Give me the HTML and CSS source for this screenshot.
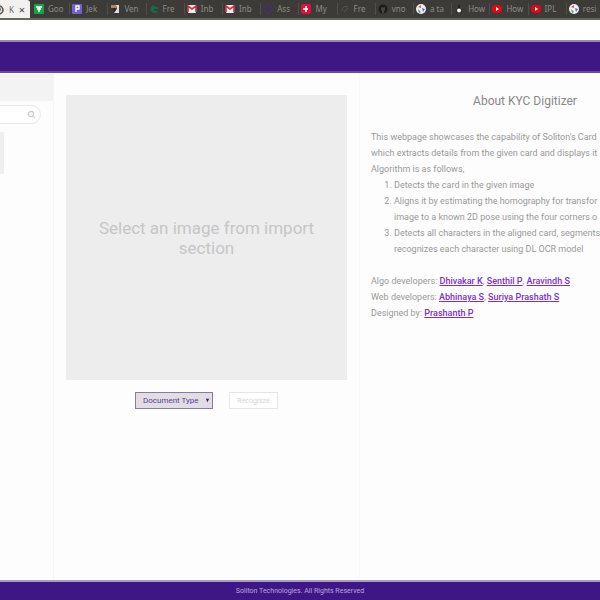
FILE: index.html
```
<!DOCTYPE html>
<html lang="en">
<head>
<meta charset="utf-8">
<title>KYC Digitizer</title>
<link rel="stylesheet" href="styles.css">
</head>
<body>
<nav class="tabs" aria-label="Tabs">
  <div class="tab-active">
    <svg class="globe" viewBox="0 0 10 10"><circle cx="5" cy="5" r="4" fill="#ddd" stroke="#555" stroke-width="1.5"/><path d="M3 3l3-1 1 3-3 2z" fill="#555"/></svg>
    <span>K</span><button class="close" aria-label="Close tab">×</button>
  </div>
  <div class="tab-list">
    <a class="tab" href="#"><svg viewBox="0 0 10 10"><rect width="10" height="10" rx="1" fill="#16a34a"/><path d="M2 3h6M5 3v5M3 5h4" stroke="#fff" stroke-width="1.4"/></svg><span>Goo</span></a>
    <a class="tab" href="#"><svg viewBox="0 0 10 10"><rect width="10" height="10" rx="1" fill="#7060d0"/><path d="M4 8V2h3v3H4" fill="none" stroke="#fff" stroke-width="1.3"/></svg><span>Jek</span></a>
    <a class="tab" href="#"><svg viewBox="0 0 10 10"><path d="M1 1h5v3H1z" fill="#b98058"/><path d="M6 1h3v8H4l3-4z" fill="#ddd"/><path d="M3 4l3 1-2 3z" fill="#222"/></svg><span>Ven</span></a>
    <a class="tab" href="#"><svg viewBox="0 0 10 10"><path d="M5 1a4 4 0 1 0 4 6H5V5h4V3H6z" fill="#176b50"/></svg><span>Fre</span></a>
    <a class="tab" href="#"><svg viewBox="0 0 10 10"><rect x="1" y="1" width="8" height="8" rx="1" fill="#eee"/><path d="M1 8V2l4 3 4-3v6" fill="none" stroke="#d93040" stroke-width="1.6"/></svg><span>Inb</span></a>
    <a class="tab" href="#"><svg viewBox="0 0 10 10"><rect x="1" y="1" width="8" height="8" rx="1" fill="#eee"/><path d="M1 8V2l4 3 4-3v6" fill="none" stroke="#d93040" stroke-width="1.6"/></svg><span>Inb</span></a>
    <a class="tab" href="#"><svg viewBox="0 0 10 10"><circle cx="5" cy="5" r="4" fill="none" stroke="#4b2a88" stroke-width="1.6" stroke-dasharray="3 1"/></svg><span>Ass</span></a>
    <a class="tab" href="#"><svg viewBox="0 0 10 10"><rect width="10" height="10" rx="2" fill="#e0103c"/><path d="M5 2v6M2 5h5" stroke="#fff" stroke-width="1.5"/></svg><span>My</span></a>
    <a class="tab" href="#"><svg viewBox="0 0 10 10"><path d="M2 7a4 4 0 0 1 6-4M4 8l4-4" fill="none" stroke="#555751"/></svg><span>Fre</span></a>
    <a class="tab" href="#"><svg viewBox="0 0 10 10"><circle cx="5" cy="5" r="4.500" fill="#1c1d1b"/><path d="M3 3l1 .5h2L7 3v3L6 7v2H4V7L3 6z" fill="#45463f"/></svg><span>vno</span></a>
    <a class="tab" href="#"><svg viewBox="0 0 10 10"><circle cx="5" cy="5" r="5" fill="#eee"/><path d="M2 3l3-2v3z" fill="#d85060"/><path d="M2 5l3 3-2 1z" fill="#35a867"/><path d="M6 4l3 1-2 3z" fill="#6070d0"/></svg><span>a ta</span></a>
    <a class="tab" href="#"><svg viewBox="0 0 10 10"><path d="M4 1h2v3l2 3-1 2H3L2 7l2-3z" fill="#222"/><circle cx="5" cy="6.500" r="2" fill="#fff"/></svg><span>How</span></a>
    <a class="tab" href="#"><svg viewBox="0 0 10 10"><rect y="1" width="10" height="8" rx="3" fill="#df0716"/><path d="M4 3l3 2-3 2z" fill="#fff"/></svg><span>How</span></a>
    <a class="tab" href="#"><svg viewBox="0 0 10 10"><rect y="1" width="10" height="8" rx="3" fill="#df0716"/><path d="M4 3l3 2-3 2z" fill="#fff"/></svg><span>IPL</span></a>
    <a class="tab" href="#"><svg viewBox="0 0 10 10"><circle cx="5" cy="5" r="5" fill="#eee"/><path d="M2 3l3-2v3z" fill="#d85060"/><path d="M2 5l3 3-2 1z" fill="#35a867"/><path d="M6 4l3 1-2 3z" fill="#6070d0"/></svg><span>resi</span></a>
  </div>
</nav>
<div class="toolbar"></div>
<header class="banner"></header>
<div class="content">
  <aside class="sidebar">
    <div class="side-head"></div>
    <div class="search">
      <input type="search" aria-label="Search">
      <svg viewBox="0 0 10 10"><circle cx="4.500" cy="4.500" r="3" fill="#f4f4f4" stroke="#ccc" stroke-width="1.3"/><path d="M7 7l2 2" stroke="#ccc" stroke-width="1.3"/></svg>
    </div>
    <div class="thumb"></div>
  </aside>
  <main class="workspace">
    <div class="preview">Select an image from import section</div>
    <div class="actions">
      <div class="select-box">
        <select aria-label="Document type"><option>Document Type</option></select>
        <svg viewBox="0 0 6 6"><path d="M1 1h4L3 5z" fill="#3d1785"/></svg>
      </div>
      <button class="recognize" disabled>Recognize</button>
    </div>
  </main>
  <section class="about">
    <h1>About KYC Digitizer</h1>
    <p>This webpage showcases the capability of Soliton's Card<br>which extracts details from the given card and displays it<br>Algorithm is as follows,</p>
    <ol>
      <li>Detects the card in the given image</li>
      <li>Aligns it by estimating the homography for transfor<br>image to a known 2D pose using the four corners o</li>
      <li>Detects all characters in the aligned card, segments<br>recognizes each character using DL OCR model</li>
    </ol>
    <p class="credits">Algo developers: <a href="#">Dhivakar K</a>, <a href="#">Senthil P</a>, <a href="#">Aravindh S</a><br>Web developers: <a href="#">Abhinaya S</a>, <a href="#">Suriya Prashath S</a><br>Designed by: <a href="#">Prashanth P</a></p>
  </section>
</div>
<footer class="footer">Soliton Technologies. All Rights Reserved</footer>
</body>
</html>
```
FILE: styles.css
```
* { box-sizing: border-box; }

body {
  margin: 0;
  min-height: 100vh;
  display: flex;
  flex-direction: column;
  background: #fdfdfd;
  font-family: Roboto, "Liberation Sans", sans-serif;
  font-size: 9px;
  line-height: 16px;
  color: #999;
}

button, select, input { font: inherit; }

.tabs {
  display: flex;
  height: 20px;
  overflow: hidden;
  background: #3c3b37;
  border-bottom: 2px solid #66655f;
  font: 8px/18px "Noto Sans", sans-serif;
}

.tab-active {
  flex: 0 0 30px;
  display: flex;
  align-items: center;
  justify-content: space-between;
  height: 20px;
  padding-right: 5px;
  background: #f2f1f0;
  border-radius: 0 3px 0 0;
  color: #666;
}

.globe { width: 10px; height: 10px; margin-left: -6px; }

.close {
  padding: 0;
  border: 0;
  background: none;
  color: #444;
  font-size: 11px;
  line-height: 18px;
}

.tab-list {
  flex: 1;
  display: grid;
  grid-template-columns: repeat(15, 1fr);
  margin: 0 -5px 0 2px;
}

.tab {
  display: flex;
  align-items: center;
  gap: 4px;
  min-width: 0;
  padding-left: 2px;
  overflow: hidden;
  color: #8e8d87;
  text-decoration: none;
  white-space: nowrap;
  background: linear-gradient(#50504b, #50504b) right center / 1px 12px no-repeat;
}

.tab svg { flex: none; width: 10px; height: 10px; }

.toolbar { height: 20px; background: #fff; }

.banner {
  height: 33px;
  background: #3f1784;
  border-top: 2px solid #978bb4;
  border-bottom: 2px solid #7045ac;
}

.content {
  flex: 1;
  display: flex;
  min-width: 0;
  overflow: hidden;
}

.sidebar {
  flex: 0 0 54px;
  min-width: 0;
  border-right: 1px solid #f5f4f6;
}

.side-head { height: 27px; margin-top: 1px; background: #f3f3f3; }

.search {
  display: flex;
  align-items: center;
  height: 19px;
  margin: 4px 12px 0 -16px;
  padding-right: 4px;
  border: 1px solid #e9e9e9;
  border-radius: 10px;
  background: #fff;
}

.search input {
  flex: 1;
  width: 0;
  min-width: 0;
  height: 14px;
  padding: 0;
  border: 0;
  outline: 0;
  appearance: none;
  background: none;
}

.search svg { flex: none; width: 9px; height: 9px; }

.thumb { width: 4px; height: 42px; margin-top: 8px; background: #efefef; }

.workspace {
  flex: 0 0 306px;
  padding: 22px 12px 0;
  border-right: 1px solid #f9f8fa;
}

.preview {
  display: flex;
  align-items: center;
  justify-content: center;
  height: 285px;
  padding: 0 24px;
  background: #ededed;
  color: #c6c6c6;
  font-size: 17px;
  line-height: 20px;
  text-align: center;
}

.actions {
  display: flex;
  justify-content: center;
  gap: 16px;
  margin-top: 12px;
  font-size: 7px;
  line-height: 10px;
}

.select-box { position: relative; width: 78px; height: 17px; }

.select-box select {
  width: 100%;
  height: 100%;
  padding: 0 0 0 7px;
  appearance: none;
  border: 1px solid #8a78a8;
  border-radius: 0;
  background: #e0dee3;
  color: #5a3b96;
  font-size: 8px;
}

.select-box svg {
  position: absolute;
  top: 6px;
  right: 3px;
  width: 5px;
  height: 5px;
}

.recognize {
  width: 49px;
  height: 17px;
  padding: 0;
  border: 1px solid #e6e6e6;
  background: #fff;
  color: #d5d5d5;
}

.about {
  flex: 1 0 330px;
  padding: 22px 11px 0;
  white-space: nowrap;
}

.about h1 {
  margin: 0 0 22px;
  font-size: 12px;
  line-height: 12px;
  font-weight: 400;
  text-align: center;
  color: #888;
}

.about p { margin: 0; }
.about ol { margin: 0; padding-left: 23px; }
.about .credits { margin-top: 16px; }
.about a { color: #7a2ee0; font-weight: 500; }

.footer {
  height: 20px;
  border-top: 2px solid #a99bc5;
  background: #3f1784;
  color: #b9a6dc;
  font-size: 7px;
  line-height: 18px;
  text-align: center;
}
```
